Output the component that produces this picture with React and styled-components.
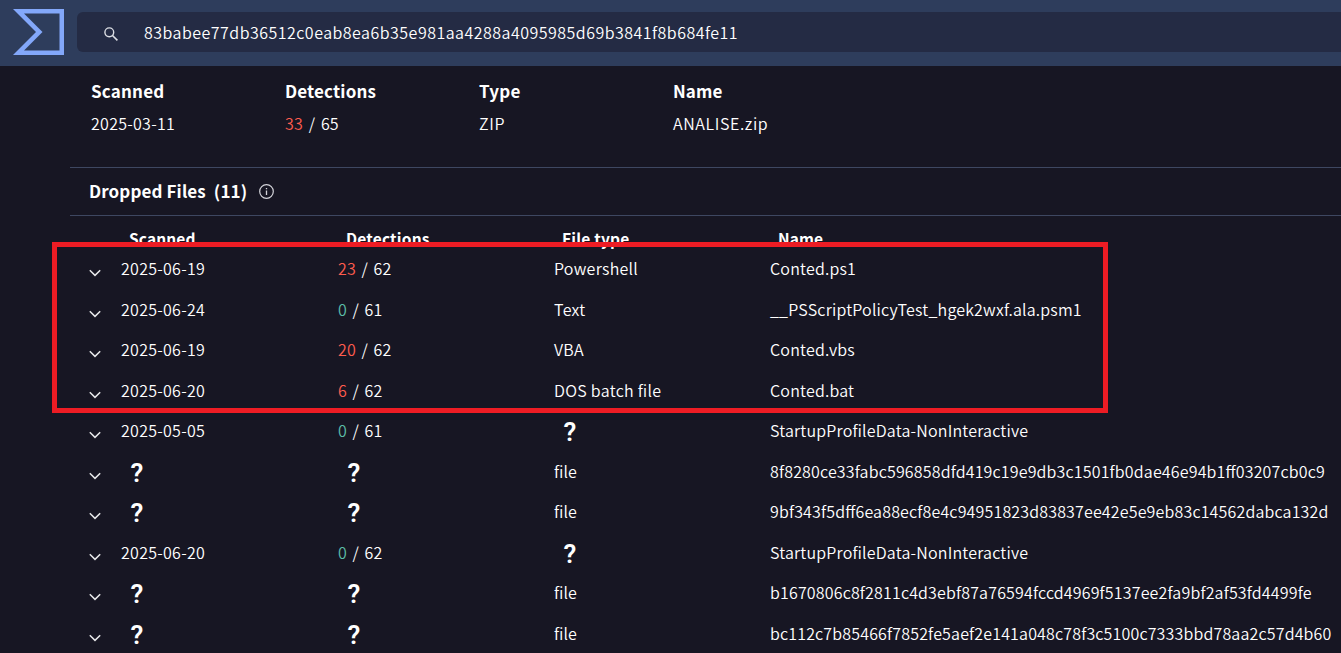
import React from "react";
import styled, { createGlobalStyle } from "styled-components";

const GlobalStyle = createGlobalStyle`
  * { box-sizing: border-box; }
  body {
    margin: 0;
    background: #171623;
    color: #fff;
    font-family: "Noto Sans CJK JP", "Noto Sans", sans-serif;
    font-size: 16px;
    font-weight: 350;
    overflow: hidden;
  }
`;

const Page = styled.div`
  position: relative;
  width: 1341px;
  height: 653px;
  overflow: hidden;
`;

const TopBar = styled.header`
  display: flex;
  height: 66px;
  background: #2e3d5c;
`;

const Logo = styled.svg`
  display: block;
  width: 51px;
  height: 46px;
  margin: 9px 13px 0;
`;

const SearchBox = styled.div`
  display: flex;
  align-items: center;
  flex: 1;
  height: 40px;
  margin-top: 12px;
  padding-left: 27px;
  border-radius: 6px 0 0 6px;
  background: #242b44;
`;

const SearchIcon = styled.svg`
  width: 14px;
  height: 14px;
  margin: 4px 26px 0 0;
`;

const Text = styled.span`
  white-space: pre;
  letter-spacing: ${(p) => p.$track || 0}px;
  font-feature-settings: "liga" 1;
`;

const Summary = styled.section`
  display: grid;
  grid-template-columns: repeat(3, 194px) 1fr;
  grid-template-rows: 34px 32px;
  align-items: center;
  height: 101px;
  padding: 7px 0 0 91px;
`;

const Heading = styled(Text)`
  font-weight: 700;
`;

const SummaryHeading = styled(Heading)`
  font-size: 17px;
`;

const SectionTitle = styled.h2`
  display: flex;
  align-items: center;
  height: 49px;
  margin: 0 0 0 70px;
  padding-left: 19px;
  border: solid #3e4761;
  border-width: 1px 0;
  font-size: 17px;
  line-height: 24px;

  ${Heading} {
    margin-top: -1px;
  }
`;

const InfoIcon = styled.svg`
  width: 15px;
  height: 15px;
  margin-left: 12px;
`;

const Columns = styled.div`
  display: grid;
  grid-template-columns: 217px 216px 216px 1fr;
  align-items: center;
  height: 33.5px;
  padding: 10.5px 0 0 129px;
  font-size: 15.5px;
`;

const Row = styled.div`
  display: grid;
  grid-template-columns: 32px 217px 216px 216px 1fr;
  align-items: center;
  height: 40.5px;
  padding-left: 89px;

  ${Text} {
    margin-top: -3px;
  }
`;

const Chevron = styled.svg`
  width: 12px;
  height: 8px;
  margin-top: 7px;
`;

const Count = styled.span`
  color: ${(p) => (p.$clean ? "#5cbda8" : "#ff5c4e")};
`;

const Ratio = styled(Text)`
  word-spacing: ${(p) => p.$gap}px;
`;

const Unknown = styled.span`
  padding: 1px 0 0 9.5px;
  font: 600 26px/1 Roboto, sans-serif;
`;

const Highlight = styled.div`
  position: absolute;
  left: 52px;
  top: 242px;
  width: 1056px;
  height: 171px;
  border: 5px solid #ed1c24;
`;

const files = [
  ["2025-06-19", 23, 62, "Powershell", "Conted.ps1"],
  ["2025-06-24", 0, 61, "Text", "__PSScriptPolicyTest_hgek2wxf.ala.psm1"],
  ["2025-06-19", 20, 62, "VBA", "Conted.vbs"],
  ["2025-06-20", 6, 62, "DOS batch file", "Conted.bat"],
  ["2025-05-05", 0, 61, null, "StartupProfileData-NonInteractive"],
  [null, null, null, "file", "8f8280ce33fabc596858dfd419c19e9db3c1501fb0dae46e94b1ff03207cb0c9"],
  [null, null, null, "file", "9bf343f5dff6ea88ecf8e4c94951823d83837ee42e5e9eb83c14562dabca132d"],
  ["2025-06-20", 0, 62, null, "StartupProfileData-NonInteractive"],
  [null, null, null, "file", "b1670806c8f2811c4d3ebf87a76594fccd4969f5137ee2fa9bf2af53fd4499fe"],
  [null, null, null, "file", "bc112c7b85466f7852fe5aef2e141a048c78f3c5100c7333bbd78aa2c57d4b60"],
];

function Detections({ hits, total, gap = 2 }) {
  return (
    <Ratio $gap={gap} $track={0.1}>
      <Count $clean={hits === 0}>{hits}</Count>
      {" / "}
      {total}
    </Ratio>
  );
}

function FileRow({ file }) {
  const [date, hits, total, type, name] = file;
  return (
    <Row>
      <Chevron viewBox="0 0 12 8">
        <path d="M.8 1.2 6 6.4l5.2-5.2" fill="none" stroke="#e8e8ea" strokeWidth="1.5" />
      </Chevron>
      {date ? <Text $track={0.28}>{date}</Text> : <Unknown>?</Unknown>}
      {total ? <Detections hits={hits} total={total} /> : <Unknown>?</Unknown>}
      {type ? <Text $track={type === "file" ? 0.1 : 0.28}>{type}</Text> : <Unknown>?</Unknown>}
      <Text $track={name.length === 64 ? 0.165 : 0.2}>{name}</Text>
    </Row>
  );
}

export default function App() {
  return (
    <Page>
      <GlobalStyle />
      <TopBar>
        <Logo viewBox="0 0 51 46">
          <path
            fillRule="evenodd"
            fill="#83a8fa"
            d="M0 0h51v46H0l23-23zM11 4.5 29.5 23 11 41.500H46.500V4.500z"
          />
        </Logo>
        <SearchBox>
          <SearchIcon viewBox="0 0 14 14" fill="none" stroke="#dcdee4">
            <circle cx="5.3" cy="5.3" r="4.4" strokeWidth="1.4" />
            <path d="m8.500 8.500 4.900 4.900" strokeWidth="1.6" />
          </SearchIcon>
          <Text $track={0.48}>83babee77db36512c0eab8ea6b35e981aa4288a4095985d69b3841f8b684fe11</Text>
        </SearchBox>
      </TopBar>
      <Summary>
        <SummaryHeading $track={0.2}>Scanned</SummaryHeading>
        <SummaryHeading $track={0.15}>Detections</SummaryHeading>
        <SummaryHeading $track={0.2}>Type</SummaryHeading>
        <SummaryHeading $track={0.1}>Name</SummaryHeading>
        <Text $track={0.28}>2025-03-11</Text>
        <Detections hits={33} total={65} gap={2.2} />
        <Text $track={0.6}>ZIP</Text>
        <Text $track={0.6}>ANALISE.zip</Text>
      </Summary>
      <SectionTitle>
        <Heading $track={0.12}>Dropped Files  (11)</Heading>
        <InfoIcon viewBox="0 0 15 15" fill="none" stroke="#d4d4da">
          <circle cx="7.500" cy="7.500" r="6.800" strokeWidth="1.200" />
          <path d="M7.500 6.500v4.500M7.500 4v1.300" strokeWidth="1.300" />
        </InfoIcon>
      </SectionTitle>
      <Columns>
        <Heading $track={0.12}>Scanned</Heading>
        <Heading $track={0.2}>Detections</Heading>
        <Heading $track={0.2}>File type</Heading>
        <Heading $track={0.1}>Name</Heading>
      </Columns>
      {files.map((file, i) => (
        <FileRow key={i} file={file} />
      ))}
      <Highlight />
    </Page>
  );
}
